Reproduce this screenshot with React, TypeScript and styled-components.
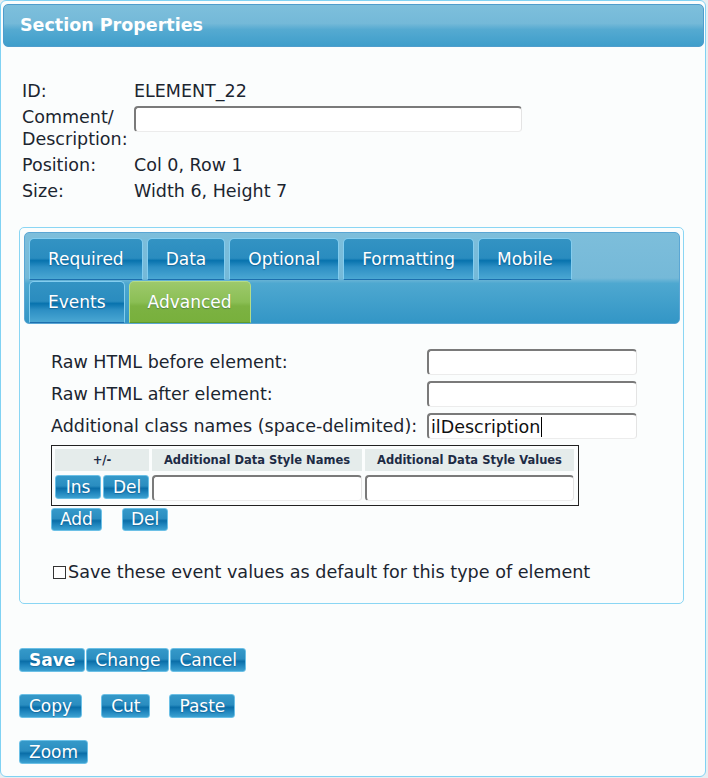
import styled, { createGlobalStyle } from 'styled-components';

const GlobalStyle = createGlobalStyle`
  body {
    margin: 0;
    background: #e8eef1;
    font-family: 'DejaVu Sans', Verdana, sans-serif;
    color: #1b2530;
  }
`;

const tabsTop = ['Required', 'Data', 'Optional', 'Formatting', 'Mobile'];
const tabsBottom = ['Events', 'Advanced'];
const activeTab = 'Advanced';

const rawFields = [
  { label: 'Raw HTML before element:', value: '' },
  { label: 'Raw HTML after element:', value: '' },
  { label: 'Additional class names (space-delimited):', value: 'ilDescription' },
];

export default function App() {
  return (
    <>
      <GlobalStyle />
      <Dialog>
        <TitleBar>Section Properties</TitleBar>

        <InfoGrid>
          <Label>ID:</Label>
          <Value>ELEMENT_22</Value>
          <Label>
            Comment/
            <br />
            Description:
          </Label>
          <div>
            <Input $width={388} />
          </div>
          <Label>Position:</Label>
          <Value>Col 0, Row 1</Value>
          <Label>Size:</Label>
          <Value>Width 6, Height 7</Value>
        </InfoGrid>

        <TabBox>
          <TabHeader>
            <TabRow>
              {tabsTop.map((t) => (
                <Tab key={t} $active={t === activeTab}>
                  {t}
                </Tab>
              ))}
            </TabRow>
            <TabRow>
              {tabsBottom.map((t) => (
                <Tab key={t} $active={t === activeTab}>
                  {t}
                </Tab>
              ))}
            </TabRow>
          </TabHeader>

          <TabContent>
            <FormGrid>
              {rawFields.map((f) => (
                <FormRow key={f.label}>
                  <FieldLabel>{f.label}</FieldLabel>
                  {f.value ? (
                    <Input as="div" $width={210}>
                      {f.value}
                      <Caret />
                    </Input>
                  ) : (
                    <Input $width={210} />
                  )}
                </FormRow>
              ))}
            </FormGrid>

            <StyleTable>
              <HeadCell>+/-</HeadCell>
              <HeadCell>Additional Data Style Names</HeadCell>
              <HeadCell>Additional Data Style Values</HeadCell>
              <ButtonCell>
                <Button $width={46}>Ins</Button>
                <Button $width={46}>Del</Button>
              </ButtonCell>
              <Input />
              <Input />
            </StyleTable>

            <ButtonRow $gap={20} $top={2}>
              <Button $height={23} $pad={8}>Add</Button>
              <Button $height={23} $pad={8}>Del</Button>
            </ButtonRow>

            <CheckRow>
              <CheckBox />
              Save these event values as default for this type of element
            </CheckRow>
          </TabContent>
        </TabBox>

        <Actions>
          <ButtonRow $gap={1}>
            <Button $bold>Save</Button>
            <Button $pad={8}>Change</Button>
            <Button $pad={8}>Cancel</Button>
          </ButtonRow>
          <ButtonRow $gap={19}>
            <Button>Copy</Button>
            <Button>Cut</Button>
            <Button>Paste</Button>
          </ButtonRow>
          <ButtonRow>
            <Button>Zoom</Button>
          </ButtonRow>
        </Actions>
      </Dialog>
    </>
  );
}

const Dialog = styled.div`
  box-sizing: border-box;
  width: 706px;
  height: 777px;
  padding: 3px 1px 0 2px;

  border: 1px solid #80d2f3;
  border-radius: 6px;
  background: #fbfdfd;
`;

const TitleBar = styled.div`
  box-sizing: border-box;
  height: 43px;
  padding-left: 16px;

  border: 1px solid #4f9dcc;
  border-radius: 5px;
  background: linear-gradient(
    180deg,
    #7dbfdc 0%,
    #74b9d8 45%,
    #55aad1 60%,
    #3f9ecb 100%
  );

  color: #ffffff;
  font-size: 17.5px;
  font-weight: bold;
  line-height: 41px;
`;

const InfoGrid = styled.div`
  margin: 33px 0 0 19px;

  display: grid;
  grid-template-columns: 112px 388px;
  row-gap: 4px;

  font-size: 17.5px;
  line-height: 22px;
`;

const Label = styled.div``;

const Value = styled.div``;

const Input = styled.input<{ $width?: number }>`
  box-sizing: border-box;
  width: ${(p) => (p.$width ? `${p.$width}px` : '100%')};
  height: 26px;
  margin: 0;
  padding: 0 2px;

  display: flex;
  align-items: center;

  border-style: solid;
  border-width: 2px 1px 1px 2px;
  border-color: #7a7a7a #e4e4e4 #ececec #7a7a7a;
  border-radius: 4px;
  background: #ffffff;

  color: #111111;
  font-family: 'DejaVu Sans', Verdana, sans-serif;
  font-size: 17.5px;
  outline: none;
`;

const Caret = styled.span`
  display: inline-block;
  width: 1px;
  height: 20px;
  margin-left: 1px;

  background: #000000;
`;

const TabBox = styled.div`
  box-sizing: border-box;
  width: 665px;
  margin: 25px 0 0 16px;
  padding: 4px 3px 20px 4px;

  border: 1px solid #8ad6f4;
  border-radius: 5px;
`;

const TabHeader = styled.div`
  box-sizing: border-box;
  height: 92px;
  padding: 5px 0 0 4px;

  display: flex;
  flex-direction: column;
  gap: 1px;

  border: 1px solid #5aa6d4;
  border-radius: 5px;
  background: linear-gradient(
    180deg,
    #7dbedb 0%,
    #75b9d8 50%,
    #4ea8d0 56%,
    #3396c6 100%
  );
`;

const TabRow = styled.div`
  display: flex;
  gap: 4px;
`;

const Tab = styled.div<{ $active?: boolean }>`
  box-sizing: border-box;
  height: 42px;
  padding: 0 18px;

  display: flex;
  align-items: center;

  border: 1px solid ${(p) => (p.$active ? '#b4dc86' : '#83cdef')};
  border-bottom-color: ${(p) => (p.$active ? '#5e9b2c' : '#1d6fae')};
  border-radius: 5px 5px 0 0;
  background: ${(p) =>
    p.$active
      ? 'linear-gradient(180deg, #9dc96b 0%, #8bbf55 50%, #7cb242 60%, #78b03c 100%)'
      : 'linear-gradient(180deg, #3393c3 0%, #2a8cbf 48%, #0873ae 54%, #2d8fc4 70%, #4aa7d3 100%)'};

  color: #ffffff;
  font-size: 17px;
  text-shadow: 0 1px 1px rgba(0, 40, 80, 0.35);
`;

const TabContent = styled.div`
  padding: 25px 0 0 27px;
`;

const FormGrid = styled.div`
  display: flex;
  flex-direction: column;
  gap: 6px;
`;

const FormRow = styled.div`
  display: grid;
  grid-template-columns: 376px 210px;
  align-items: center;
`;

const FieldLabel = styled.div`
  font-size: 17.5px;
`;

const StyleTable = styled.div`
  box-sizing: border-box;
  width: 528px;
  margin-top: 6px;
  padding: 3px 3px 4px 3px;

  display: grid;
  grid-template-columns: 94px 210px 209px;
  column-gap: 3px;
  row-gap: 4px;

  border: 1px solid #222222;
`;

const HeadCell = styled.div`
  height: 22px;

  display: flex;
  align-items: center;
  justify-content: center;

  background: #e5eceb;

  color: #1d2b45;
  font-size: 11.5px;
  font-weight: bold;
`;

const ButtonCell = styled.div`
  display: flex;
  gap: 2px;
  align-items: flex-start;
`;

const Button = styled.button<{
  $bold?: boolean;
  $width?: number;
  $height?: number;
  $pad?: number;
}>`
  box-sizing: border-box;
  width: ${(p) => (p.$width ? `${p.$width}px` : 'auto')};
  height: ${(p) => p.$height ?? 24}px;
  margin: 0;
  padding: 0 ${(p) => p.$pad ?? 9}px;

  border: 1px solid #6cc0e6;
  border-radius: 3px;
  background: linear-gradient(
    180deg,
    #3599c9 0%,
    #2a8dc0 45%,
    #0a6ea8 56%,
    #1f85bd 75%,
    #3ca1d1 100%
  );

  color: #ffffff;
  font-family: 'DejaVu Sans', Verdana, sans-serif;
  font-size: 17px;
  font-weight: ${(p) => (p.$bold ? 'bold' : 'normal')};
  line-height: 1;
  text-shadow: 0 1px 1px rgba(0, 40, 80, 0.3);
`;

const ButtonRow = styled.div<{ $gap?: number; $top?: number }>`
  margin-top: ${(p) => p.$top ?? 0}px;

  display: flex;
  gap: ${(p) => p.$gap ?? 0}px;
`;

const CheckRow = styled.div`
  margin: 30px 0 0 2px;

  display: flex;
  align-items: center;
  gap: 2px;

  font-size: 17.6px;
  line-height: 22px;
`;

const CheckBox = styled.span`
  box-sizing: border-box;
  width: 13px;
  height: 13px;

  border: 1px solid #333333;
  background: #ffffff;
`;

const Actions = styled.div`
  margin: 44px 0 0 16px;

  display: flex;
  flex-direction: column;
  gap: 22px;
`;
